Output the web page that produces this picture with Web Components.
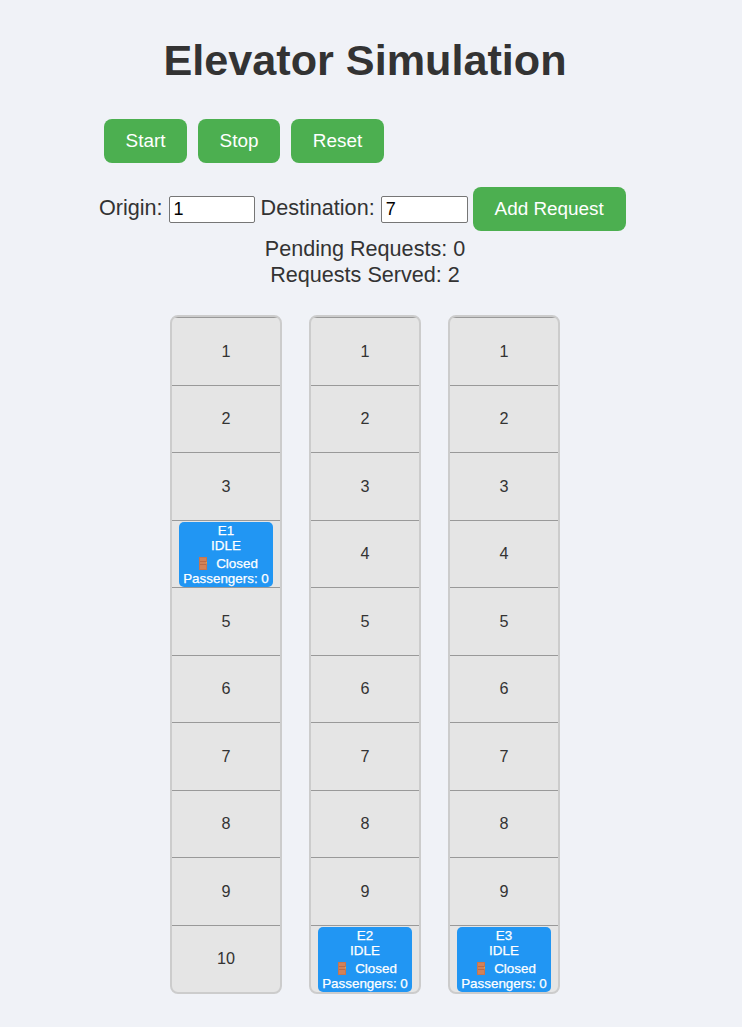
<!DOCTYPE html>
<html lang="en">
<head>
<meta charset="utf-8">
<title>Elevator Simulation</title>
<style>
body { margin: 0; background: #f0f2f7; color: #333; font-family: "Liberation Sans", Arial, sans-serif; font-size: 21.6px; }
</style>
</head>
<body>
<elevator-app></elevator-app>
<script>
class SimButton extends HTMLElement {
  constructor() {
    super();
    this.attachShadow({ mode: "open" }).innerHTML = `
      <style>
        :host { display: block; flex: none; }
        button { display: block; width: 100%; height: 44px; margin: 0; padding: 0; border: 0; border-radius: 8px; background: #4caf50; color: #fff; font: 18.9px "Liberation Sans", Arial, sans-serif; line-height: 44px; cursor: pointer; }
      </style>
      <button type="button"><slot></slot></button>`;
  }
}
customElements.define("sim-button", SimButton);

class FloorField extends HTMLElement {
  connectedCallback() {
    this.attachShadow({ mode: "open" }).innerHTML = `
      <style>
        :host { display: flex; align-items: center; gap: 6px; height: 27px; }
        label { line-height: 25px; margin-top: -3px; white-space: nowrap; }
        input { box-sizing: border-box; width: var(--field-width, 87px); height: 27px; margin: 0; padding: 0 4px; border: 1px solid #767676; border-radius: 2px; background: #fff; color: #000; font: 18px "Liberation Sans", Arial, sans-serif; }
      </style>
      <label for="floor"><slot></slot></label><input id="floor" type="text">`;
    this.shadowRoot.querySelector("input").value = this.getAttribute("value");
  }
}
customElements.define("floor-field", FloorField);

class ElevatorCar extends HTMLElement {
  connectedCallback() {
    this.attachShadow({ mode: "open" }).innerHTML = `
      <style>
        :host { display: flex; flex-direction: column; box-sizing: border-box; width: 94px; height: 65px; padding-top: 1px; border-radius: 5px; background: #2196f3; color: #fff; font-size: 13.4px; line-height: 15px; text-align: center; white-space: nowrap; -webkit-text-stroke: .25px #fff; }
        .door { display: flex; justify-content: center; gap: 9px; height: 18px; padding-left: 5px; line-height: 22px; }
        svg { width: 8px; height: 13px; margin-top: 4px; }
      </style>
      <div>${this.getAttribute("name")}</div>
      <div>IDLE</div>
      <div class="door"><svg viewBox="0 0 8 13"><path fill="#c6764f" d="M0 0h8v13H0z"/><path fill="#d08259" d="M1 1h6v3H1zM1 5h6v2H1zM1 8h6v4H1z"/><path stroke="#b5653f" stroke-width=".6" d="M1 4.5h6M1 7.5h6"/><path fill="#e8a33d" d="M7 5h1v1.5H7z"/></svg><span>Closed</span></div>
      <div>Passengers: 0</div>`;
  }
}
customElements.define("elevator-car", ElevatorCar);

class ElevatorShaft extends HTMLElement {
  connectedCallback() {
    const at = Number(this.getAttribute("floor"));
    let floors = "";
    for (let n = 1; n <= 10; n++) {
      floors += `<div class="floor">${n === at ? `<elevator-car name="${this.getAttribute("name")}"></elevator-car>` : `<span>${n}</span>`}</div>`;
    }
    this.attachShadow({ mode: "open" }).innerHTML = `
      <style>
        :host { display: block; box-sizing: border-box; width: 112px; height: 679px; border: 2px solid #ccc; border-radius: 8px; background: #e5e5e5; overflow: hidden; }
        .floor { display: flex; align-items: center; justify-content: center; box-sizing: border-box; height: 67.5px; border-top: 1px solid #999; font-size: 16.2px; line-height: 18px; }
        .floor:nth-of-type(even) span { padding-bottom: 1px; }
        elevator-car { align-self: flex-start; margin-top: 1px; }
      </style>${floors}`;
  }
}
customElements.define("elevator-shaft", ElevatorShaft);

class ElevatorApp extends HTMLElement {
  constructor() {
    super();
    this.attachShadow({ mode: "open" }).innerHTML = `
      <style>
        :host { display: block; width: 730px; height: 1027px; overflow: hidden; }
        h1 { margin: 35px 0 34px; font-size: 43.2px; line-height: 50px; text-align: center; white-space: nowrap; }
        .controls { display: flex; gap: 11px; padding-left: 104px; }
        .request { display: flex; align-items: center; height: 44px; margin-top: 24px; padding-left: 99px; }
        .request floor-field:first-child { --field-width: 86px; }
        .request floor-field + floor-field { margin-left: 6px; }
        .request sim-button { margin-left: 5px; }
        .stats { margin-top: 5px; text-align: center; line-height: 26px; }
        .shafts { display: flex; justify-content: center; gap: 27px; margin-top: 27px; }
      </style>
      <h1>Elevator Simulation</h1>
      <div class="controls">
        <sim-button style="width:83px">Start</sim-button>
        <sim-button style="width:82px">Stop</sim-button>
        <sim-button style="width:93px">Reset</sim-button>
      </div>
      <div class="request">
        <floor-field value="1">Origin:</floor-field>
        <floor-field value="7">Destination:</floor-field>
        <sim-button style="width:153px">Add Request</sim-button>
      </div>
      <div class="stats">
        <div>Pending Requests: 0</div>
        <div>Requests Served: 2</div>
      </div>
      <div class="shafts">
        <elevator-shaft name="E1" floor="4"></elevator-shaft>
        <elevator-shaft name="E2" floor="10"></elevator-shaft>
        <elevator-shaft name="E3" floor="10"></elevator-shaft>
      </div>`;
  }
}
customElements.define("elevator-app", ElevatorApp);
</script>
</body>
</html>
